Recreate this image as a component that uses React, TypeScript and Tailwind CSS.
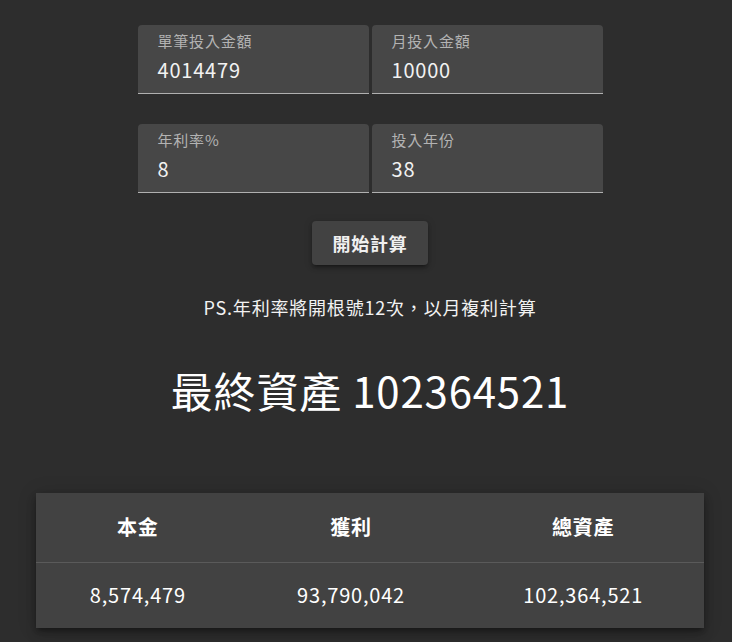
import React from "react";

const fields = [
  [
    { label: "單筆投入金額", value: "4014479" },
    { label: "月投入金額", value: "10000" },
  ],
  [
    { label: "年利率%", value: "8" },
    { label: "投入年份", value: "38" },
  ],
];

function Field({ label, value }: { label: string; value: string }) {
  return (
    <div className="h-[69px] w-[231px] rounded-t-[4px] border-b border-[#b0b0b0] bg-[#474747] pl-5 pt-[6px]">
      <div className="text-[15px] leading-[20px] text-[#b3b3b3]">{label}</div>
      <div className="mt-[5px] text-[20px] leading-[28px] text-[#f2f2f2]">{value}</div>
    </div>
  );
}

export default function App() {
  return (
    <div className="min-h-screen bg-[#2d2d2d] pl-2 font-['Noto_Sans_CJK_TC',sans-serif] tracking-[0.8px] text-white">
      <div className="flex flex-col items-center pt-[25px]">
        <div className="flex flex-col gap-[30px]">
          {fields.map((row, i) => (
            <div key={i} className="flex gap-[3px]">
              {row.map((f) => (
                <Field key={f.label} label={f.label} value={f.value} />
              ))}
            </div>
          ))}
        </div>

        <button className="mt-[28px] h-[44px] rounded-[4px] bg-[#424242] px-5 text-[18px] font-bold text-[#f0f0f0] shadow-[0_3px_3px_-2px_rgba(0,0,0,0.3),0_3px_4px_0_rgba(0,0,0,0.2),0_1px_8px_0_rgba(0,0,0,0.15)]">
          開始計算
        </button>

        <p className="mt-[28px] text-[18px] leading-[28px] text-[#f2f2f2]">
          PS.年利率將開根號12次，以月複利計算
        </p>

        <h1 className="mt-[41px] text-[42px] leading-[56px] text-white">最終資產 102364521</h1>

        <div className="mt-[75px] w-[668px] bg-[#424242] shadow-[0_3px_5px_-1px_rgba(0,0,0,0.3),0_6px_10px_0_rgba(0,0,0,0.2),0_1px_18px_0_rgba(0,0,0,0.15)]">
          <table className="w-full border-collapse text-center">
            <thead>
              <tr className="h-[69px] border-b border-[#5a5a5a]">
                <th className="px-4 text-[20px] font-bold">本金</th>
                <th className="px-4 text-[20px] font-bold">獲利</th>
                <th className="px-4 text-[20px] font-bold">總資產</th>
              </tr>
            </thead>
            <tbody>
              <tr className="h-[66px]">
                <td className="px-4 text-[20px]">8,574,479</td>
                <td className="px-4 text-[20px]">93,790,042</td>
                <td className="px-4 text-[20px]">102,364,521</td>
              </tr>
            </tbody>
          </table>
        </div>
      </div>
    </div>
  );
}
